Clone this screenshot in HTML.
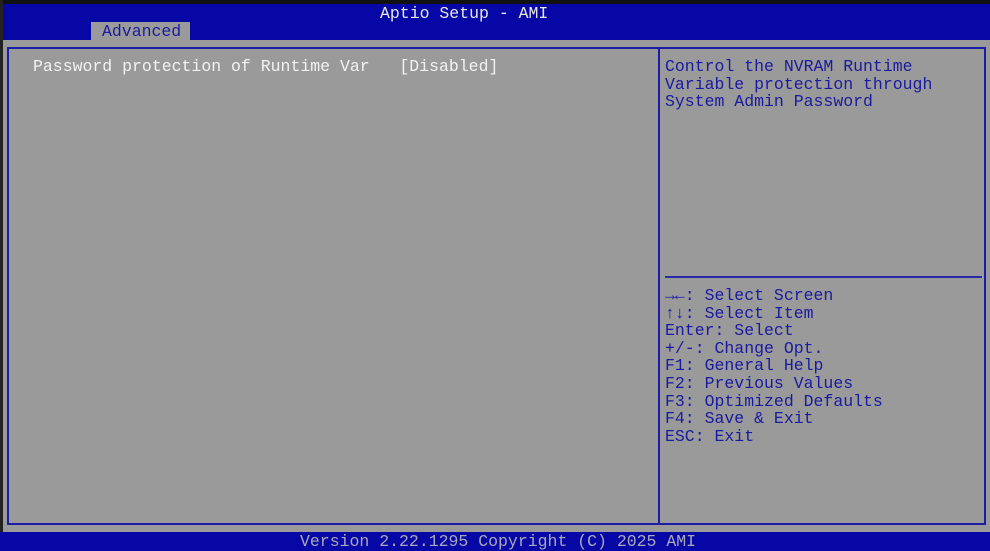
<!DOCTYPE html>
<html><head><meta charset="utf-8"><style>
body{margin:0;width:990px;height:551px;overflow:hidden;background:#9a9a9a;position:relative;font-family:"Liberation Mono","DejaVu Sans Mono",monospace;font-size:16.5px}
div{position:absolute;box-sizing:border-box}
.t{white-space:pre;line-height:17.6px}
</style></head><body>
<div style="left:0;top:0;width:990px;height:4px;background:#111"></div>
<div style="left:0;top:4px;width:990px;height:36px;background:#0707a6"></div>
<div class="t" style="left:380px;top:5px;color:#e8e8e8">Aptio Setup - AMI</div>
<div style="left:91px;top:22px;width:99px;height:18px;background:#9a9a9a"></div>
<div class="t" style="left:102px;top:23px;color:#1a1aa0">Advanced</div>
<div style="left:0;top:0;width:3px;height:551px;background:#222"></div>
<div style="left:7px;top:47px;width:979px;height:478px;border:2px solid #1c1ca6"></div>
<div style="left:658px;top:47px;width:2px;height:478px;background:#1c1ca6"></div>
<div style="left:665px;top:276px;width:317px;height:2px;background:#2a2aa8"></div>
<div class="t" style="left:33px;top:58px;color:#f2f2f2">Password protection of Runtime Var   [Disabled]</div>
<div class="t" style="left:665px;top:58px;color:#1a1aa0">Control the NVRAM Runtime
Variable protection through
System Admin Password</div>
<div class="t" style="left:665px;top:287px;color:#1a1aa0">→←: Select Screen
↑↓: Select Item
Enter: Select
+/-: Change Opt.
F1: General Help
F2: Previous Values
F3: Optimized Defaults
F4: Save &amp; Exit
ESC: Exit</div>
<div style="left:0;top:532px;width:990px;height:19px;background:#0707a6"></div>
<div class="t" style="left:300px;top:533px;color:#a8a8b8">Version 2.22.1295 Copyright (C) 2025 AMI</div>
</body></html>
